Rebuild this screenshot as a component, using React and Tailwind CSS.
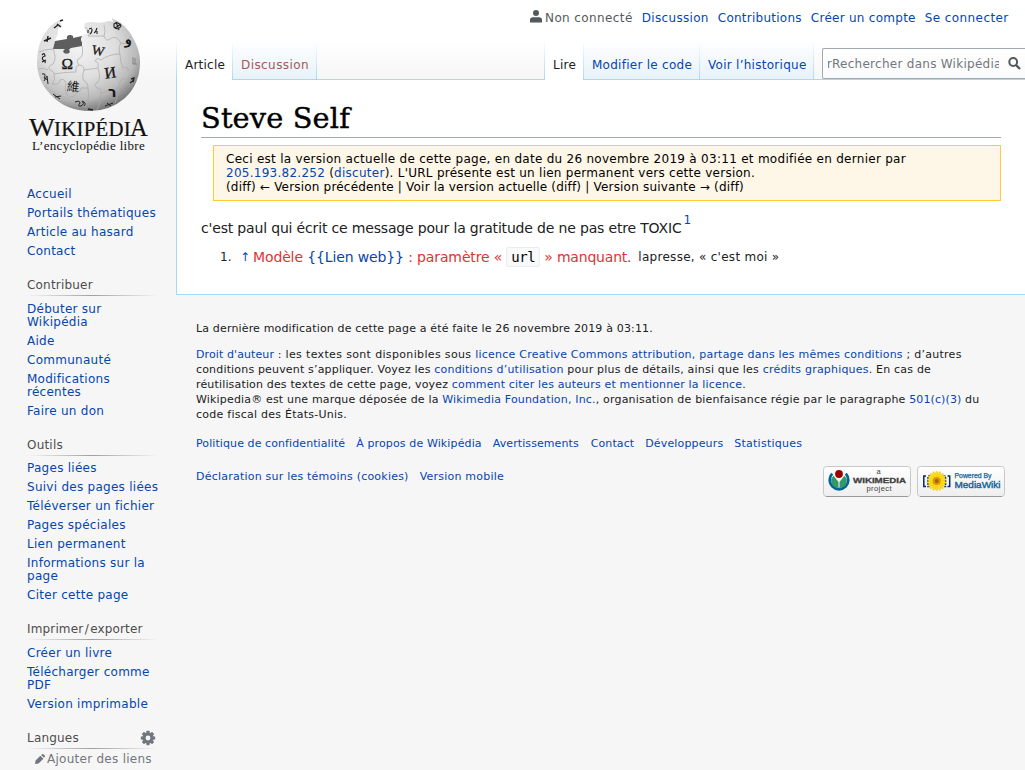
import React from 'react';

const Link = ({ children, className = '' }) => (
  <a className={`text-[#0645ad] ${className}`}>{children}</a>
);

function PuzzleGlobe() {
  return (
    <svg width="176" height="160" viewBox="0 0 176 160" className="block">
      <defs>
        <radialGradient id="globe" cx="0.4" cy="0.3" r="0.72">
          <stop offset="0" stopColor="#f4f4f4" />
          <stop offset="0.5" stopColor="#dedede" />
          <stop offset="0.8" stopColor="#b9b9b9" />
          <stop offset="1" stopColor="#777" />
        </radialGradient>
      </defs>
      <path
        d="M62 19 L60 22 L62 26 L58 29 L58 34 L55 40 L54 45 L63 48 L82 45 L82 36 L87 33 L84 27 L85 23 L91 22 Q102 24 109 21 L113 22 L112 18 Q126 24 133 38 Q140 50 140 62 Q140 84 125 98 Q110 111 90 111 Q66 111 51 95 Q37 81 37 62 Q37 42 48 29 Q54 22 62 19 Z"
        fill="url(#globe)"
      />
      <path
        d="M55 41 L67 39 Q66 35 70 35 Q74 35 73 38 L82 36 Q80 40 82 42 L82 46 L71 48 Q68 49 70 52 Q68 55 64 53 Q62 51 65 49 L53 49 Z"
        fill="#5e5e5e"
      />
      <g fill="none" stroke="#a9a9a9" strokeWidth="0.7">
        <path d="M53 49 Q57 58 53 64 Q47 66 50 70 Q54 71 54 74 Q65 72 76 72 Q75 66 79 65 Q84 65 84 70 L98 68 Q99 62 95 61 Q97 57 101 60 Q109 54 120 54 Q118 47 121 43 Q126 45 127 41 L131 36" />
        <path d="M39 52 Q46 49 53 49 M38 69 Q44 67 48 70 M54 74 Q56 80 52 84 Q60 85 60 80 Q64 78 66 83 M66 83 Q64 92 68 96 Q74 99 76 93 Q81 92 81 88 L88 88 Q88 82 83 80 Q82 74 84 70" />
        <path d="M98 68 Q101 77 98 82 Q93 84 97 88 Q101 88 101 93 Q111 91 119 87 Q119 80 123 79 Q129 80 135 73 M120 54 Q120 62 123 68 Q129 66 128 71 M82 46 Q84 55 80 58 Q75 60 79 65 M85 27 Q92 32 88 36 L104 36 Q106 42 110 39 Q116 34 121 43" />
        <path d="M45 86 Q53 94 66 98 Q73 100 71 105 M88 88 Q90 99 85 108 M101 93 Q101 103 97 110 M119 87 Q119 95 115 103 M104 25 Q106 32 104 36" />
      </g>
      <g fill="#161616" fontFamily="'Liberation Serif', serif">
        <text x="61.5" y="68.5" fontSize="15.5" stroke="#161616" strokeWidth="0.3">Ω</text>
        <text x="92" y="55" fontSize="13.5" stroke="#161616" strokeWidth="0.3" transform="rotate(12 98 50)">W</text>
        <text x="104.5" y="78" fontSize="16" stroke="#161616" strokeWidth="0.3" transform="rotate(-8 110 73)">И</text>
        <text x="67" y="91" fontSize="12.5" fontFamily="'Noto Sans CJK TC', sans-serif" transform="rotate(6 72 86)">維</text>
        <text x="108" y="97" fontSize="14" fontFamily="'DejaVu Sans', sans-serif" fontWeight="700">ר</text>
        <text x="124.5" y="44" fontSize="14" fontWeight="700">و</text>
      </g>
      <g fill="none" stroke="#222" strokeWidth="1.4">
        <path d="M89 29 L92 28 M88 30 V33 M92 29 Q92 33 90 34 M94 33 Q96 32 97 28 M97 31 V34" strokeWidth="1.1" />
        <path d="M44 41 L51 38 M48 36 L47 42 M54 28 L58 25 M57 24 L61 27 M60 21 L63 20" />
        <path d="M42 55 Q45 52 45 56 Q41 57 43 60 Q46 61 45 63 M42 62 L46 60" strokeWidth="1.2" />
        <path d="M42 74 Q47 73 44 78 L48 80 M44 81 L47 76 L48 84" strokeWidth="1" />
        <path d="M53 94 L60 99 M55 97 L61 96" strokeWidth="1" />
        <path d="M75 102 Q80 100 80 103 Q77 107 81 106 Q85 104 82 101 Q87 103 84 106" strokeWidth="1" />
        <path d="M114 24 Q118 21 121 26 Q118 31 114 27 Z M115 28 L121 24 M116 22 L119 30" strokeWidth="1.1" />
        <path d="M131 79 L134 78 L133 82 M130 83 L134 80" />
        <path d="M133 57 V64 H137 M135 58 V64" strokeWidth="0.8" stroke="#777" />
        <path d="M105 106 L113 103 M107 103 L111 106" strokeWidth="1" />
        <path d="M88 109 L93 110" />
      </g>
      <g fill="#111" stroke="#111" strokeWidth="0.2" fontFamily="'Liberation Serif', serif">
        <text x="29" y="136" fontSize="25.5" textLength="26" lengthAdjust="spacingAndGlyphs">W</text>
        <text x="54" y="136" fontSize="20" textLength="77" lengthAdjust="spacingAndGlyphs">IKIPÉDI</text>
        <text x="130" y="136" fontSize="25.5" textLength="18" lengthAdjust="spacingAndGlyphs">A</text>
        <text x="32" y="150" fontSize="13" textLength="113" strokeWidth="0">L’encyclopédie libre</text>
      </g>
    </svg>
  );
}

function Portal({ title, items, gap, listGap, icon }) {
  return (
    <section>
      <div className={`${gap} flex h-[21px] w-[131px] flex-col`}>
        <h3 className="flex h-5 items-center justify-between text-[12px] font-normal leading-5 tracking-[0.2px] text-[#4d4d4d]">
          {title}
          {icon}
        </h3>
        <div className="h-px bg-linear-to-r from-transparent via-[#a0a0a0] to-transparent" />
      </div>
      <ul className={listGap}>
        {items.map((t) => (
          <li key={t[0]} className="py-[3px] leading-[13px]">
            {t.map((s) => (
              <Link key={s} className="block">{s}</Link>
            ))}
          </li>
        ))}
      </ul>
    </section>
  );
}

function Gear() {
  return (
    <svg width="16" height="16" viewBox="0 0 20 20" className="mr-[2px]" fill="#72777d">
      <g transform="translate(10 10)">
        {[0, 45, 90, 135].map((a) => (
          <rect key={a} x="-2" y="-9" width="4" height="18" rx="0.5" transform={`rotate(${a})`} />
        ))}
        <circle r="7.2" />
        <circle r="3" fill="#f6f6f6" />
      </g>
    </svg>
  );
}

function Sidebar() {
  return (
    <aside className="h-[770px] w-[176px] shrink-0 overflow-hidden text-[12px] tracking-[0.27px]">
      <PuzzleGlobe />
      <nav className="pl-[27px] pt-[25px]">
        <ul>
          {['Accueil', 'Portails thématiques', 'Article au hasard', 'Contact'].map((t) => (
            <li key={t} className="py-[3px] leading-[13px]"><Link className="block">{t}</Link></li>
          ))}
        </ul>
        <Portal title="Contribuer" gap="mt-[14px]" listGap="mt-1"
          items={[['Débuter sur', 'Wikipédia'], ['Aide'], ['Communauté'], ['Modifications', 'récentes'], ['Faire un don']]} />
        <Portal title="Outils" gap="mt-[14px]" listGap="mt-[3px]"
          items={[['Pages liées'], ['Suivi des pages liées'], ['Téléverser un fichier'], ['Pages spéciales'], ['Lien permanent'], ['Informations sur la', 'page'], ['Citer cette page']]} />
        <Portal title={<span className="tracking-[0.15px]">Imprimer&#8202;/&#8202;exporter</span>} gap="mt-[14px]" listGap="mt-1"
          items={[['Créer un livre'], ['Télécharger comme', 'PDF'], ['Version imprimable']]} />
        <Portal title="Langues" gap="mt-[14px]" listGap="" items={[]} icon={<Gear />} />
        <div className="flex h-5 items-center pl-2 text-[#72777d]">
          <svg width="10" height="10" viewBox="0 0 10 10" className="mr-[2px]" fill="#72777d">
            <path d="M0 10 L0.6 6.6 L5.4 1.8 L8.4 4.8 L3.5 9.4 Z M6.2 1.1 L7.2 0.2 Q7.9 -0.2 8.4 0.2 L9.8 1.6 Q10.2 2.1 9.8 2.8 L9 3.8 Z" />
          </svg>
          Ajouter des liens
        </div>
      </nav>
    </aside>
  );
}

const Fade = () => (
  <div className="h-10 w-px shrink-0 bg-linear-to-b from-white to-[#a7d7f9]" />
);

function Tab({ children, active, width, color = 'text-[#0645ad]', spacing = 'tracking-[0.27px]' }) {
  return (
    <>
      <div
        className={`flex h-10 shrink-0 pl-2 pt-[18px] text-[12px] leading-[15px] ${spacing} ${width} ${
          active ? 'bg-white text-[#202122]' : `border-b border-[#a7d7f9] bg-linear-to-b from-white to-[#e8f2f8] ${color}`
        }`}
      >
        {children}
      </div>
      <Fade />
    </>
  );
}

function Header() {
  return (
    <header className="h-20">
      <div className="flex h-10 items-start gap-[9px] pl-[354px] pt-[11px] text-[12px] leading-[15px]">
        <span className="flex text-[#54595d] tracking-[0.4px]">
          <svg width="12" height="13" viewBox="0 0 12 13" className="-mt-px mr-[3px]" fill="#54595d">
            <circle cx="6" cy="3" r="3" />
            <path d="M0 12.5 V10 Q0 7.3 3 7.3 H9 Q12 7.3 12 10 V12.5 Z" />
          </svg>
          Non connecté
        </span>
        <Link className="tracking-[0.32px]">Discussion</Link>
        <Link className="tracking-[0.25px]">Contributions</Link>
        <Link className="tracking-[0.27px]">Créer un compte</Link>
        <Link className="tracking-[0.41px]">Se connecter</Link>
      </div>
      <div className="flex h-10">
        <Fade />
        <Tab active width="w-[55px]" spacing="tracking-[0.22px]">Article</Tab>
        <Tab width="w-[83px]" color="text-[#a55858]" spacing="tracking-[0.42px]">Discussion</Tab>
        <div className="h-10 w-[227px] border-b border-[#a7d7f9]" />
        <Fade />
        <Tab active width="w-[38px]">Lire</Tab>
        <Tab width="w-[115px]">Modifier le code</Tab>
        <Tab width="w-[113px]">Voir l’historique</Tab>
        <div className="flex h-10 grow justify-end overflow-hidden border-b border-[#a7d7f9] pt-2">
          <div className="flex h-[31px] w-[203px] shrink-0 items-center rounded-l-[2px] border border-r-0 border-[#a2a9b1] bg-white/50 pl-[5px]">
            <div className="flex w-[171px] justify-start overflow-hidden whitespace-nowrap text-[12px] leading-[15px] tracking-[0.27px] text-[#72777d]">
              <span className="relative top-px flex w-1 shrink-0 justify-end overflow-hidden">r</span>
              <span className="relative top-px">Rechercher dans Wikipédia</span>
            </div>
            <svg width="13" height="13" viewBox="0 0 13 13" className="ml-[9px] shrink-0" fill="none" stroke="#54595d">
              <circle cx="5.2" cy="5" r="3.9" strokeWidth="2" />
              <path d="M8 8 L12 12" strokeWidth="2.4" />
            </svg>
          </div>
        </div>
      </div>
    </header>
  );
}

function Article() {
  return (
    <main className="h-[215px] border-b border-l border-[#a7d7f9] bg-white pl-6 pr-6">
      <h1 className="h-[58px] w-[800px] border-b border-[#a2a9b1] pt-[18px] font-['DejaVu_Serif',serif] text-[28.8px] font-normal leading-10 tracking-[0.15px] text-black [-webkit-text-stroke:0.4px_black]">
        Steve Self
      </h1>
      <div className="ml-3 mt-[7px] h-14 w-[788px] whitespace-nowrap border border-[#fc3] bg-[#fef6e7] pl-3 pt-[6px] text-[12px] leading-[14px] text-black">
        <p className="tracking-[0.28px]">Ceci est la version actuelle de cette page, en date du 26 novembre 2019 à 03:11 et modifiée en dernier par</p>
        <p className="tracking-[0.26px]"><Link>205.193.82.252</Link> (<Link>discuter</Link>). L'URL présente est un lien permanent vers cette version.</p>
        <p className="tracking-[0.19px]">(diff) ← Version précédente | Voir la version actuelle (diff) | Version suivante → (diff)</p>
      </div>
      <p className="mt-[16px] flex h-[22px] whitespace-nowrap text-[14px] leading-[22px] tracking-[-0.17px] text-[#202122]">
        c'est paul qui écrit ce message pour la gratitude de ne pas etre TOXIC
        <span className="ml-[2px] mt-[-8px] text-[12px] leading-[22px]"><Link>1</Link></span>
      </p>
      <div className="mt-[7px] flex h-[22px] items-center whitespace-pre pl-[19px] text-[12px] leading-[22px] text-[#202122]">
        <span className="w-5">1.</span>
        <Link className="w-[13px]">↑</Link>
        <span className="text-[14px] tracking-[-0.13px] text-[#d33]">Modèle <Link>{'{{Lien web}}'}</Link> : paramètre «</span>
        <code className="ml-1 flex h-5 w-[34px] items-center justify-center rounded-[2px] border border-[#eaecf0] bg-[#f8f9fa] font-['DejaVu_Sans_Mono',monospace] text-[14px] tracking-[-0.4px] text-black">url</code>
        <span className="ml-1 text-[14px] tracking-[-0.2px] text-[#d33]">» manquant.</span>
        <span className="ml-[7px] tracking-[0.28px]">lapresse, « c'est moi »</span>
      </div>
    </main>
  );
}

function WikimediaBadge() {
  return (
    <svg width="88" height="31" viewBox="0 0 88 31">
      <defs>
        <linearGradient id="badge" x2="0" y2="1"><stop stopColor="#fff" /><stop offset="1" stopColor="#eee" /></linearGradient>
      </defs>
      <rect x="0.5" y="0.5" width="87" height="30" rx="3" fill="url(#badge)" stroke="#c8c8c8" />
      <path d="M3 30.5 H85" stroke="#999" />
      <path d="M9.2 7.6 A9.3 9.3 0 1 0 22.8 7.6" fill="none" stroke="#069" strokeWidth="2.8" />
      <path d="M10.6 9.8 A7 7 0 0 0 15.5 22 V16 Z M21.4 9.8 A7 7 0 0 1 16.5 22 V16 Z" fill="#396" />
      <circle cx="16" cy="8" r="3.9" fill="#900" />
      <g fontFamily="'Liberation Sans', sans-serif" fill="#404040">
        <text x="53.5" y="8" fontSize="7.5">a</text>
        <text x="30" y="16.5" fontSize="8" fontWeight="700" stroke="#404040" strokeWidth="0.3" textLength="53" lengthAdjust="spacingAndGlyphs">WIKIMEDIA</text>
        <text x="43.5" y="25" fontSize="7.5" textLength="25">project</text>
      </g>
    </svg>
  );
}

function MediaWikiBadge() {
  return (
    <svg width="88" height="31" viewBox="0 0 88 31">
      <rect x="0.5" y="0.5" width="87" height="30" rx="3" fill="url(#badge)" stroke="#c8c8c8" />
      <path d="M3 30.5 H85" stroke="#999" />
      <g fill="none" stroke="#002b6e" strokeWidth="1.5">
        <path d="M9 10 H6.8 V20.5 H9 M30.5 10 H32.7 V20.5 H30.5" />
        <path d="M13 10 H11 V20.5 H13 M26.5 10 H28.5 V20.5 H26.5" strokeDasharray="2 1" />
      </g>
      <g transform="translate(19.7 15)">
        {[0, 20, 40, 60, 80, 100, 120, 140, 160].map((a) => (
          <ellipse key={a} rx="1.8" ry="10" fill="#fce01c" stroke="#e6bd00" strokeWidth="0.4" transform={`rotate(${a})`} />
        ))}
        <circle r="4" fill="#dc9410" />
        <circle r="2" fill="#a86210" />
      </g>
      <g fontFamily="'Liberation Sans', sans-serif" fill="#16659a" stroke="#16659a" strokeWidth="0.25">
        <text x="37.5" y="11.5" fontSize="6.5" textLength="37" lengthAdjust="spacingAndGlyphs">Powered By</text>
        <text x="37.5" y="21.5" fontSize="9.3" strokeWidth="0.4" textLength="46" lengthAdjust="spacingAndGlyphs">MediaWiki</text>
      </g>
    </svg>
  );
}

function Footer() {
  return (
    <footer className="whitespace-nowrap pl-5 pr-5 pt-[26px] text-[11px] leading-[15px] text-[#202122]">
      <p className="tracking-[0.16px]">La dernière modification de cette page a été faite le 26 novembre 2019 à 03:11.</p>
      <div className="mt-[11px]">
        <p className="tracking-[0.26px]"><Link className="tracking-[0.1px]">Droit d'auteur</Link> : <span className="tracking-[0.35px]">les textes sont disponibles sous </span><Link className="tracking-[0.22px]">licence Creative Commons attribution, partage dans les mêmes conditions</Link> ; d’autres</p>
        <p className="tracking-[0.2px]"><span className="tracking-[0.17px]">conditions peuvent s’appliquer. Voyez les </span><Link>conditions d’utilisation</Link> pour plus de détails, ainsi que les <Link>crédits graphiques</Link>. En cas de</p>
        <p className="tracking-[0.16px]">réutilisation des textes de cette page, voyez <Link>comment citer les auteurs et mentionner la licence</Link>.</p>
        <p className="tracking-[0.17px]">Wikipedia® est une marque déposée de la <Link>Wikimedia Foundation, Inc.</Link>, <span className="tracking-[0.19px]">organisation de bienfaisance régie par le paragraphe </span><Link className="tracking-[0.1px]">501(c)(3)</Link> du</p>
        <p className="tracking-[0.25px]">code fiscal des États-Unis.</p>
      </div>
      <div className="mt-[14px] flex gap-[11px] tracking-[0.09px]">
        <Link>Politique de confidentialité</Link>
        <Link className="tracking-[0.13px]">À propos de Wikipédia</Link>
        <Link>Avertissements</Link>
        <Link className="ml-px">Contact</Link>
        <Link className="tracking-[0.15px]">Développeurs</Link>
        <Link className="tracking-[0.25px]">Statistiques</Link>
      </div>
      <div className="mt-[15px] flex justify-between">
        <div className="mt-[3px] flex gap-[11px] tracking-[0.22px]">
          <Link>Déclaration sur les témoins (cookies)</Link>
          <Link>Version mobile</Link>
        </div>
        <div className="flex gap-[6px]">
          <WikimediaBadge />
          <MediaWikiBadge />
        </div>
      </div>
    </footer>
  );
}

export default function App() {
  return (
    <div className="flex h-[770px] w-[1025px] overflow-hidden bg-[#f6f6f6] bg-[linear-gradient(to_bottom,#ffffff_0px,#ffffff_40px,#f6f6f6_80px)] font-['DejaVu_Sans',sans-serif]">
      <Sidebar />
      <div className="w-[849px] shrink-0">
        <Header />
        <Article />
        <Footer />
      </div>
    </div>
  );
}
